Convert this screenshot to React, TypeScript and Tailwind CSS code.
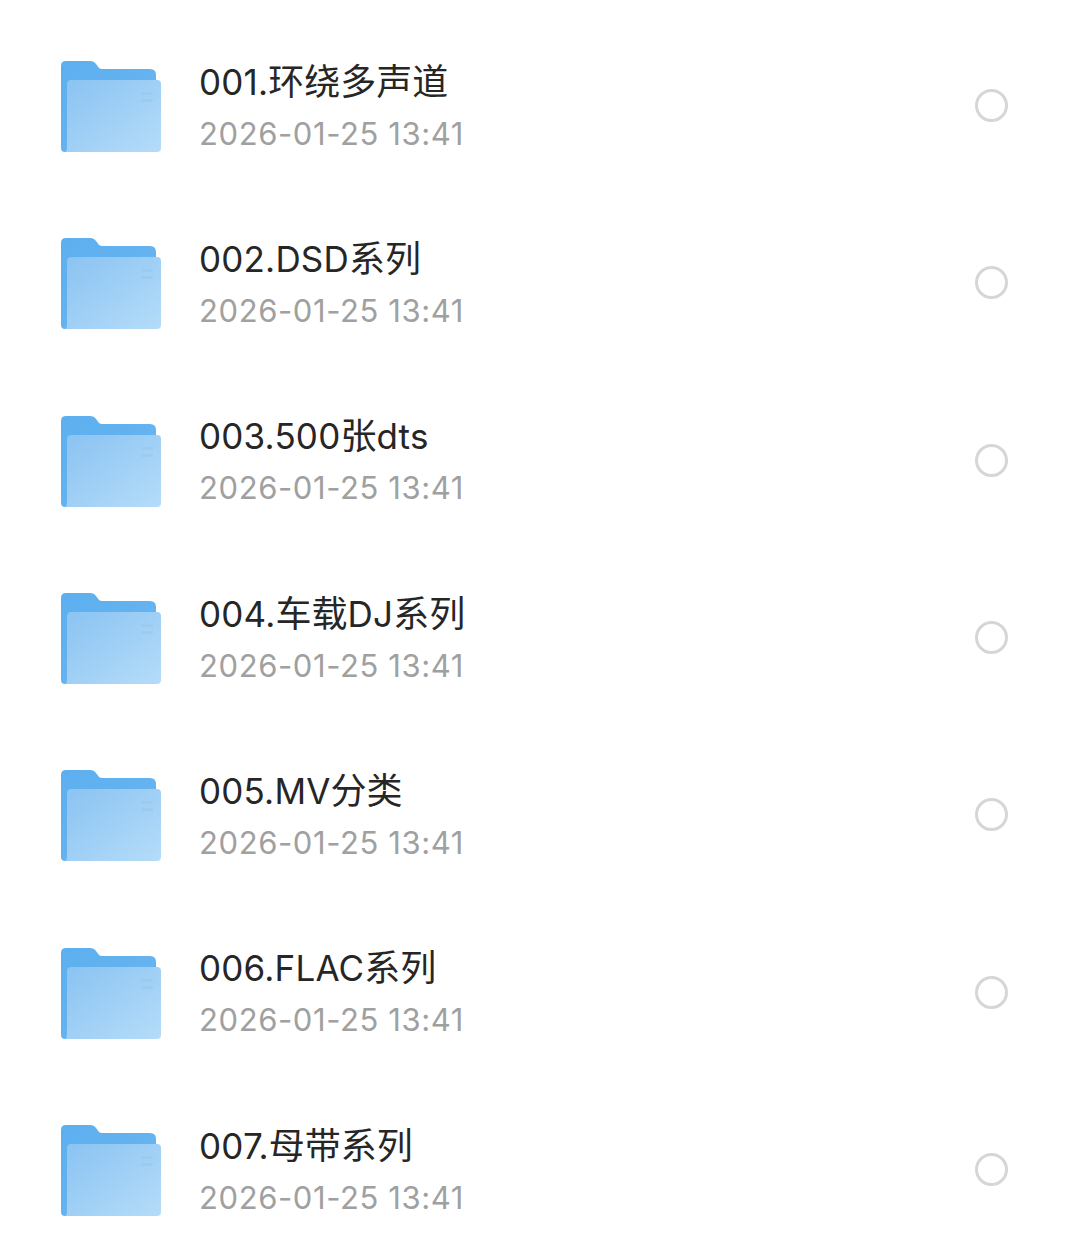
const FOLDERS = [
  '001.环绕多声道',
  '002.DSD系列',
  '003.500张dts',
  '004.车载DJ系列',
  '005.MV分类',
  '006.FLAC系列',
  '007.母带系列',
]

function FolderIcon({ id }: { id: number }) {
  return (
    <svg width="102" height="94" viewBox="0 0 102 94" className="mt-[3px] shrink-0 blur-[0.6px]">
      <defs>
        <linearGradient id={`back-${id}`} x1="0" y1="0" x2="1" y2="1">
          <stop offset="0" stopColor="#5cafef" />
          <stop offset="1" stopColor="#6cb6f0" />
        </linearGradient>
        <linearGradient id={`front-${id}`} x1="0" y1="0" x2="1" y2="1">
          <stop offset="0" stopColor="#8ac3f2" />
          <stop offset="1" stopColor="#b5dcf9" />
        </linearGradient>
      </defs>
      <path
        d="M1 6 Q1 1 6 1 H30 Q34 1 36 4 L39 8 Q40 9 43 9 H90 Q96 9 96 15 V88 Q96 92 92 92 H5 Q1 92 1 88 Z"
        fill={`url(#back-${id})`}
      />
      <path
        d="M7 24 Q7 20 11 20 H97 Q101 20 101 24 V88 Q101 92 97 92 H5 Q7 91 7 88 Z"
        fill={`url(#front-${id})`}
      />
      <rect x="81" y="32" width="12" height="3" rx="1" fill="#9ccbf0" />
      <rect x="81" y="39" width="12" height="3" rx="1" fill="#9ccbf0" />
    </svg>
  )
}

// CJK runs sit a touch larger than the latin text around them
function Title({ name }: { name: string }) {
  return (
    <p className="text-[35px] leading-[44px] tracking-[0.2px] text-[#262626]">
      {name.split(/([\u4e00-\u9fff]+)/).map((part, i) =>
        i % 2 === 1 ? (
          <span key={i} className="text-[36px] tracking-normal">{part}</span>
        ) : (
          part
        ),
      )}
    </p>
  )
}

export default function App() {
  return (
    <div className="h-[1253px] w-[1080px] overflow-hidden bg-white pt-[17px] font-['Inter','Noto_Sans_CJK_SC',sans-serif]">
      {FOLDERS.map((name, i) => (
        <div key={name} className="flex h-[177.33px] items-center pl-[60px] pr-[72px]">
          <FolderIcon id={i} />
          <div className="ml-[37px] flex-1 pt-[4px]">
            <Title name={name} />
            <p className="mt-[8px] text-[31px] leading-[44px] tracking-[0.6px] text-[#a0a0a0]">2026-01-25 13:41</p>
          </div>
          <div className="h-[33px] w-[33px] rounded-full border-[3px] border-[#d6d6d6]" />
        </div>
      ))}
    </div>
  )
}
